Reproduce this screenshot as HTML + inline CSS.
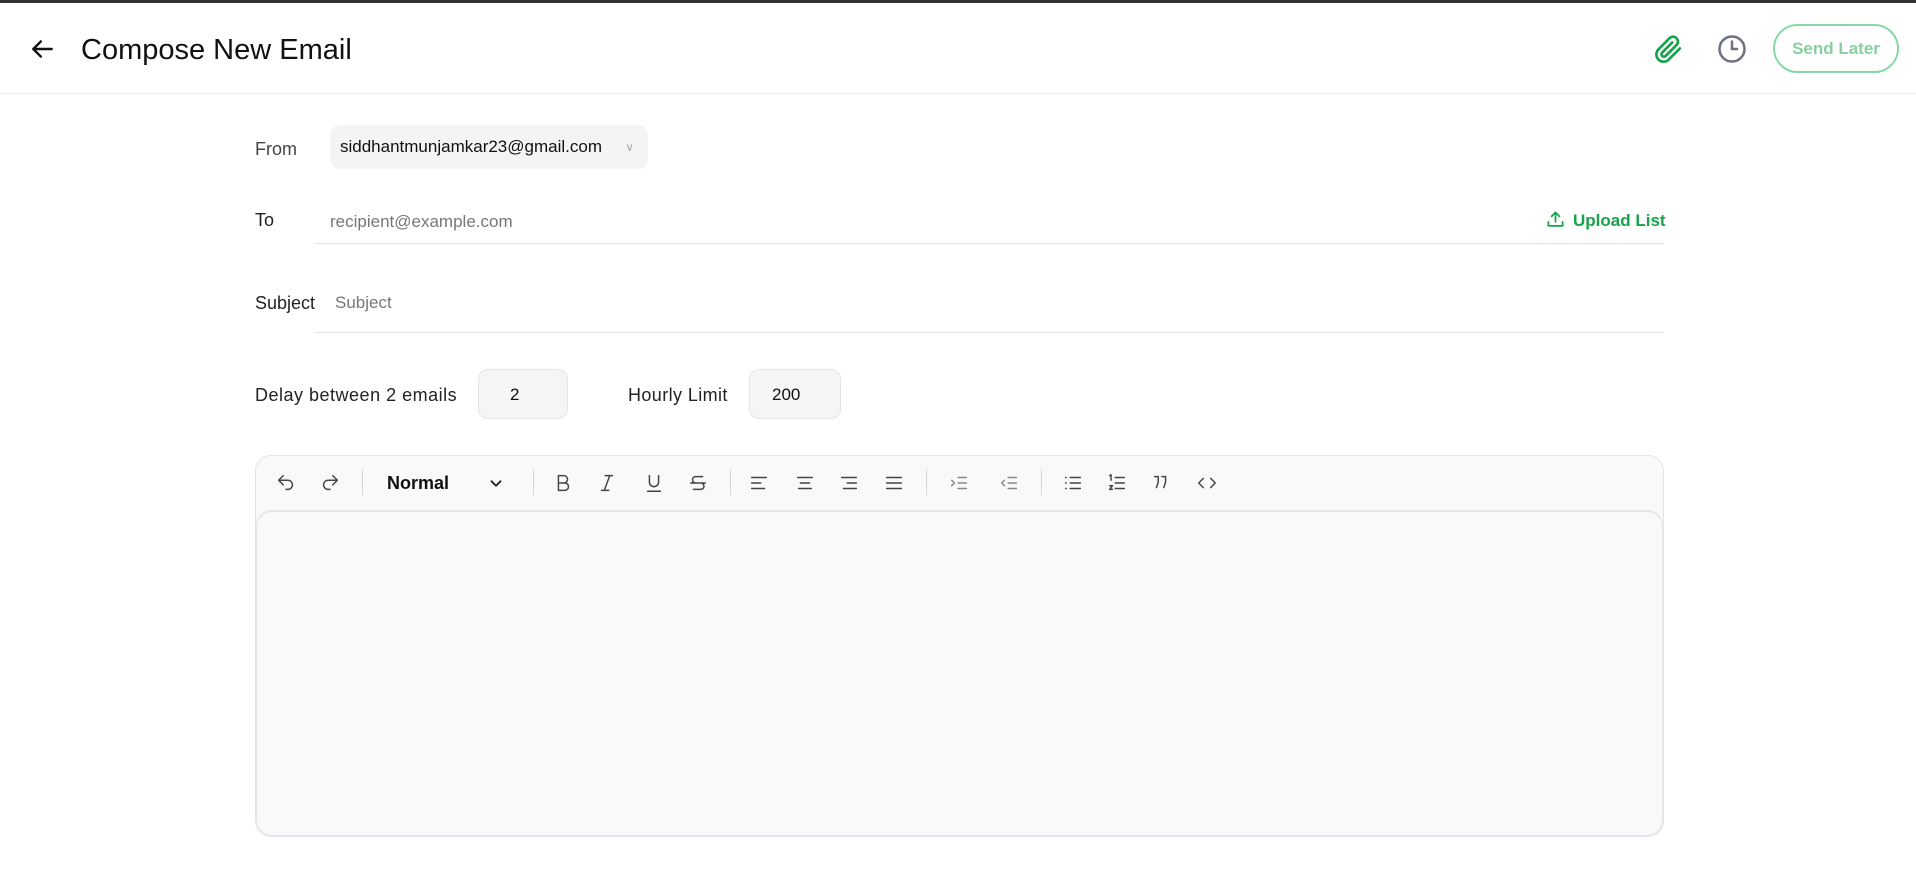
<!DOCTYPE html>
<html><head><meta charset="utf-8"><style>
*{box-sizing:border-box;margin:0;padding:0}
body{width:1916px;height:880px;background:#fff;font-family:"Liberation Sans",sans-serif;position:relative;overflow:hidden;color:#111}
.a{position:absolute}
.lbl{font-size:18px;color:#222}
.ic{position:absolute;top:472px;width:22px;height:22px}
.ic svg{width:22px;height:22px;fill:none;stroke:#444;stroke-width:1.6;stroke-linecap:round;stroke-linejoin:round}
.sep{position:absolute;top:469px;width:1px;height:26px;background:#d4d6da}
</style></head><body>
<div class="a" style="left:0;top:0;width:1916px;height:3px;background:#333"></div>
<svg class="a" style="left:30px;top:36px" width="26" height="26" viewBox="0 0 24 24" fill="none" stroke="#111" stroke-width="2.2" stroke-linecap="round" stroke-linejoin="round"><path d="M20 12H4M10 5l-7 7 7 7"/></svg>
<div class="a" style="left:81px;top:34px;font-size:29px;color:#111">Compose New Email</div>
<svg class="a" style="left:1654px;top:35px" width="29" height="29" viewBox="0 0 24 24" fill="none" stroke="#16a34a" stroke-width="2.2" stroke-linecap="round" stroke-linejoin="round"><path d="M21.4 11.1l-9.2 9.2a6 6 0 01-8.5-8.5l9.2-9.2a4 4 0 015.7 5.7l-9.2 9.2a2 2 0 01-2.8-2.8l8.5-8.5"/></svg>
<svg class="a" style="left:1717px;top:34px" width="30" height="30" viewBox="0 0 24 24" fill="none" stroke="#6b7280" stroke-width="2" stroke-linecap="round"><circle cx="12" cy="12" r="10"/><path d="M12 6v6h4"/></svg>
<div class="a" style="left:1773px;top:24px;width:126px;height:49px;border:2px solid #86d9a4;border-radius:25px;color:#86d0a0;font-size:17px;font-weight:bold;text-align:center;line-height:45px">Send Later</div>
<div class="a" style="left:0;top:93px;width:1916px;height:1px;background:#eee"></div>

<div class="a lbl" style="left:255px;top:139px;color:#444">From</div>
<div class="a" style="left:330px;top:125px;width:318px;height:44px;background:#f4f4f5;border-radius:10px;font-size:17px;line-height:44px;padding-left:10px;color:#111">siddhantmunjamkar23@gmail.com<span style="position:absolute;right:14px;top:0;color:#aaa;font-size:12px">&#x2228;</span></div>

<div class="a lbl" style="left:255px;top:210px">To</div>
<div class="a" style="left:330px;top:212px;font-size:17px;color:#777">recipient@example.com</div>
<svg class="a" style="left:1546px;top:210px" width="19" height="19" viewBox="0 0 24 24" fill="none" stroke="#16a34a" stroke-width="2.2" stroke-linecap="round" stroke-linejoin="round"><path d="M3 15v5h18v-5M12 3v12M7 8l5-5 5 5"/></svg>
<div class="a" style="left:1573px;top:211px;font-size:17px;font-weight:bold;color:#16a34a">Upload List</div>
<div class="a" style="left:315px;top:243px;width:1349px;height:1px;background:#e3e3e3"></div>

<div class="a lbl" style="left:255px;top:293px">Subject</div>
<div class="a" style="left:335px;top:293px;font-size:17px;color:#777">Subject</div>
<div class="a" style="left:315px;top:332px;width:1349px;height:1px;background:#e3e3e3"></div>

<div class="a lbl" style="left:255px;top:385px;letter-spacing:0.5px">Delay between 2 emails</div>
<div class="a" style="left:478px;top:369px;width:90px;height:50px;background:#f5f5f5;border:1px solid #e5e5e5;border-radius:10px;font-size:17px;line-height:50px;padding-left:31px">2</div>
<div class="a lbl" style="left:628px;top:385px;letter-spacing:0.4px">Hourly Limit</div>
<div class="a" style="left:749px;top:369px;width:92px;height:50px;background:#f5f5f5;border:1px solid #e5e5e5;border-radius:10px;font-size:17px;line-height:50px;padding-left:22px">200</div>

<div class="a" style="left:255px;top:455px;width:1409px;height:382px;border:1px solid #e4e5e8;border-radius:16px;background:#f8f9fb"></div>
<div class="a" style="left:256px;top:510px;width:1407px;height:326px;border:1px solid #e4e5e8;border-top:2px solid #e4e5e8;border-radius:16px;background:#f8f9fb"></div>

<div class="ic" style="left:275px"><svg viewBox="0 0 24 24"><path d="M9 14L4 9l5-5M4 9h10a5 5 0 010 10h-2"/></svg></div>
<div class="ic" style="left:319px"><svg viewBox="0 0 24 24"><path d="M15 14l5-5-5-5M20 9H10a5 5 0 000 10h2"/></svg></div>
<div class="sep" style="left:362px"></div>
<div class="a" style="left:387px;top:473px;font-size:18px;font-weight:bold;color:#111">Normal</div>
<div class="ic" style="left:485px"><svg viewBox="0 0 24 24"><path d="M7 10l5 5 5-5" stroke="#222" stroke-width="2"/></svg></div>
<div class="sep" style="left:533px"></div>
<div class="ic" style="left:552px"><svg viewBox="0 0 24 24"><path d="M7 4h6a4 4 0 010 8H7zM7 12h7a4 4 0 010 8H7z"/></svg></div>
<div class="ic" style="left:596px"><svg viewBox="0 0 24 24"><path d="M10 4h8M6 20h8M15 4l-6 16"/></svg></div>
<div class="ic" style="left:643px"><svg viewBox="0 0 24 24"><path d="M7 4v7a5 5 0 0010 0V4M5 21h14"/></svg></div>
<div class="ic" style="left:687px"><svg viewBox="0 0 24 24"><path d="M17 5H9.5a3.5 3.5 0 000 7M4 12h16M15 12a3.5 3.5 0 010 7H7"/></svg></div>
<div class="sep" style="left:730px"></div>
<div class="ic" style="left:748px"><svg viewBox="0 0 24 24"><path d="M4 6h16M4 12h10M4 18h14"/></svg></div>
<div class="ic" style="left:794px"><svg viewBox="0 0 24 24"><path d="M4 6h16M7 12h10M5 18h14"/></svg></div>
<div class="ic" style="left:838px"><svg viewBox="0 0 24 24"><path d="M4 6h16M10 12h10M6 18h14"/></svg></div>
<div class="ic" style="left:883px"><svg viewBox="0 0 24 24"><path d="M4 6h16M4 12h16M4 18h16"/></svg></div>
<div class="sep" style="left:926px"></div>
<div class="ic" style="left:948px"><svg viewBox="0 0 24 24" style="stroke:#888"><path d="M4 9l3 3-3 3M11 6h9M11 12h9M11 18h9"/></svg></div>
<div class="ic" style="left:998px"><svg viewBox="0 0 24 24" style="stroke:#888"><path d="M7 9l-3 3 3 3M11 6h9M11 12h9M11 18h9"/></svg></div>
<div class="sep" style="left:1041px"></div>
<div class="ic" style="left:1062px"><svg viewBox="0 0 24 24"><path d="M9 6h11M9 12h11M9 18h11M4 6h.5M4 12h.5M4 18h.5"/></svg></div>
<div class="ic" style="left:1106px"><svg viewBox="0 0 24 24"><path d="M10 6h10M10 12h10M10 18h10M4 4l1.5-1v6M4 15h3l-3 4h3"/></svg></div>
<div class="ic" style="left:1150px"><svg viewBox="0 0 24 24"><path d="M5 5h4v6l-2 6M13 5h4v6l-2 6"/></svg></div>
<div class="ic" style="left:1196px"><svg viewBox="0 0 24 24"><path d="M8 7l-5 5 5 5M16 7l5 5-5 5"/></svg></div>
</body></html>
